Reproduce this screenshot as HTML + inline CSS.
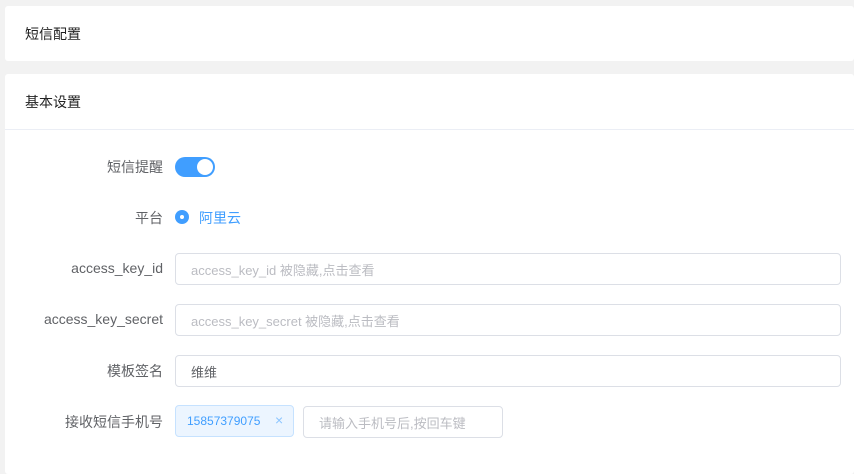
<!DOCTYPE html>
<html><head><meta charset="utf-8"><style>
body{margin:0;width:854px;height:472px;background:#f2f2f2;font-family:"Liberation Sans","Noto Sans CJK SC",sans-serif;font-size:14px;color:#333;overflow:hidden;position:relative}
.card{position:absolute;left:5px;right:0;background:#fff;border-radius:3px}
.t{position:absolute;left:20px;font-size:14px;color:#222}
.lbl{position:absolute;right:691px;color:#606266;font-size:14px;text-align:right;white-space:nowrap}
.inp{position:absolute;left:175px;width:664px;height:30px;border:1px solid #dcdfe6;border-radius:4px;box-sizing:content-box}
.inp span{position:absolute;left:15px;top:6px;font-size:13px;color:#bbbcc2}
</style></head><body>
<div class="card" style="top:6px;height:55px"><div class="t" style="top:18px">短信配置</div></div>
<div class="card" style="top:74px;height:400px">
<div class="t" style="top:18px">基本设置</div>
<div style="position:absolute;left:0;right:0;top:55px;height:1px;background:#ebeef5"></div>
</div>
<div class="lbl" style="top:157px">短信提醒</div>
<div style="position:absolute;left:175px;top:157px;width:40px;height:20px;border-radius:10px;background:#409eff"><div style="position:absolute;right:2px;top:2px;width:16px;height:16px;border-radius:50%;background:#fff"></div></div>
<div class="lbl" style="top:208px">平台</div>
<div style="position:absolute;left:175px;top:210px;width:14px;height:14px;border-radius:50%;background:#409eff"><div style="position:absolute;left:5px;top:5px;width:4px;height:4px;border-radius:50%;background:#fff"></div></div>
<div style="position:absolute;left:199px;top:208px;color:#409eff">阿里云</div>
<div class="lbl" style="top:260px">access_key_id</div>
<div class="inp" style="top:253px"><span>access_key_id 被隐藏,点击查看</span></div>
<div class="lbl" style="top:311px">access_key_secret</div>
<div class="inp" style="top:304px"><span>access_key_secret 被隐藏,点击查看</span></div>
<div class="lbl" style="top:361px">模板签名</div>
<div class="inp" style="top:355px"><span style="color:#606266">维维</span></div>
<div class="lbl" style="top:412px">接收短信手机号</div>
<div style="position:absolute;left:175px;top:405px;width:117px;height:30px;border:1px solid #c6e2ff;background:#ecf5ff;border-radius:4px;color:#409eff;font-size:12px"><span style="position:absolute;left:11px;top:8px">15857379075</span><span style="position:absolute;left:99px;top:6px;font-size:14px;color:#8cc5ff">×</span></div>
<div style="position:absolute;left:303px;top:406px;width:198px;height:30px;border:1px solid #dcdfe6;border-radius:4px"><span style="position:absolute;left:15px;top:6px;font-size:13px;color:#bbbcc2">请输入手机号后,按回车键</span></div>
</body></html>
